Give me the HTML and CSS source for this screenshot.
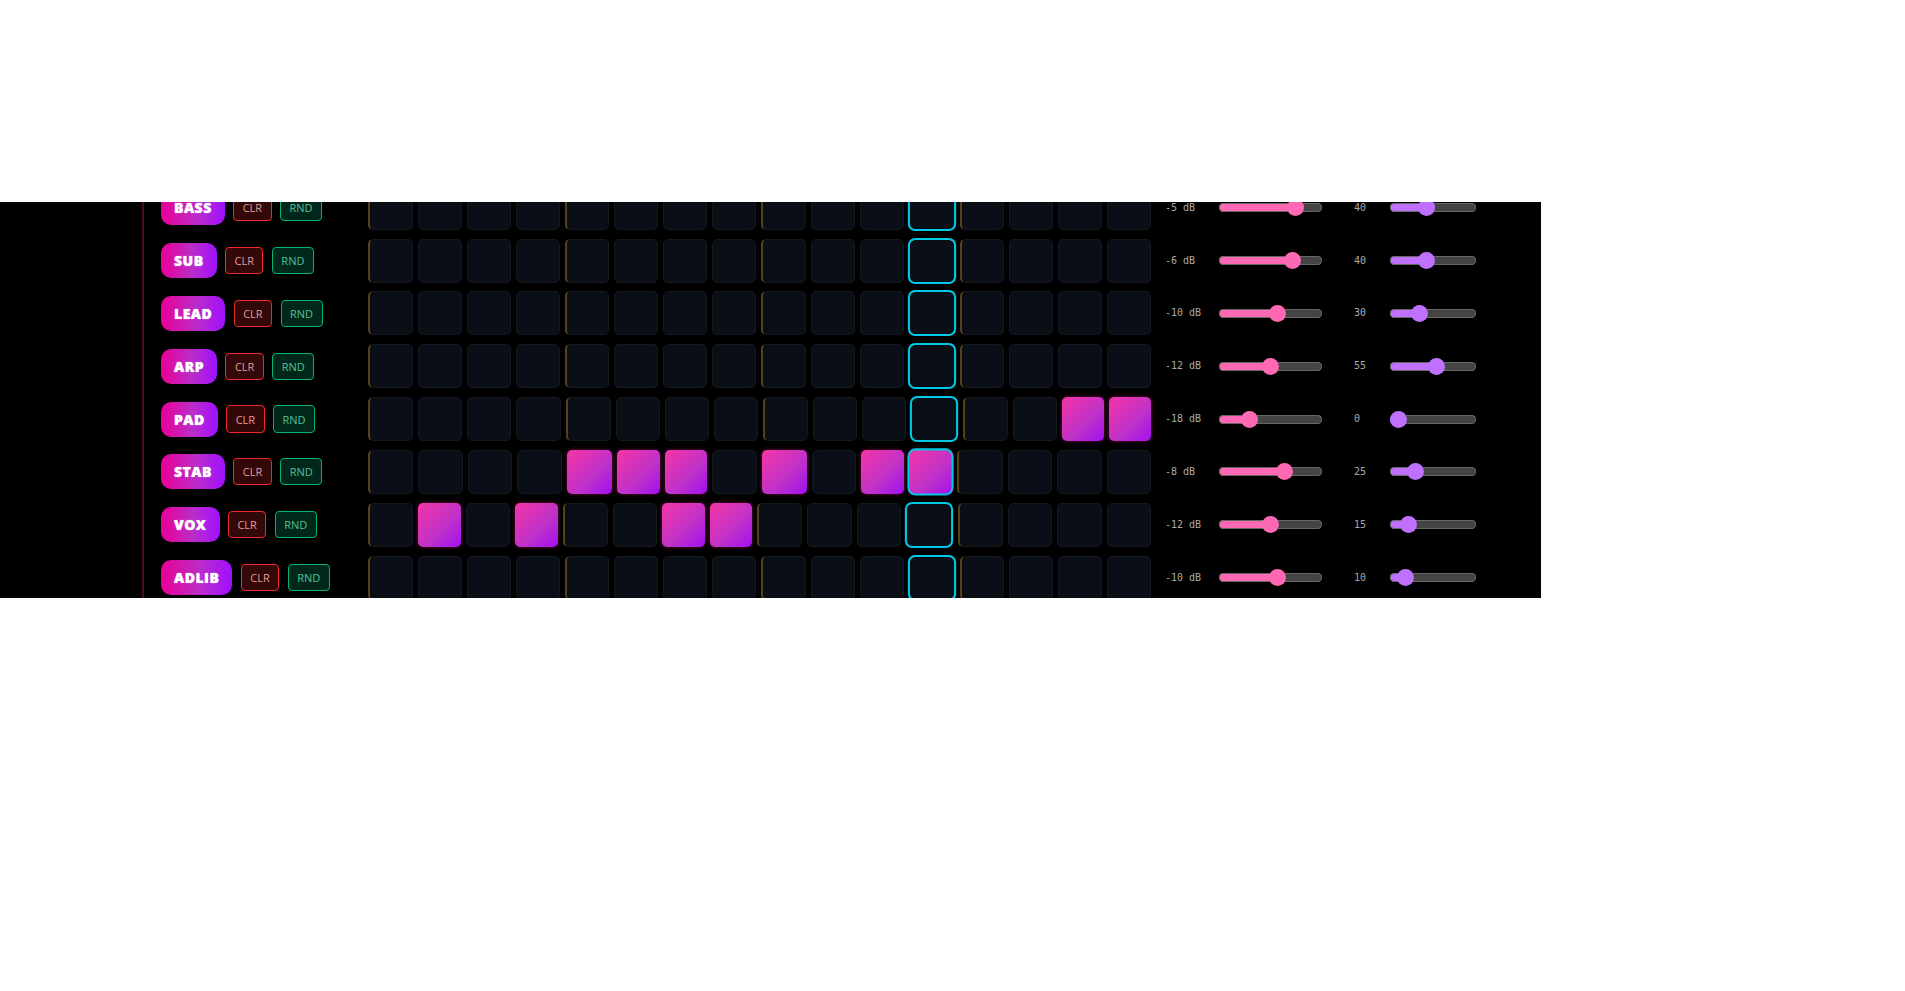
FILE: index.html
```html
<!DOCTYPE html>
<html lang="en">
<head>
<meta charset="utf-8">
<title>Step Sequencer</title>
<link rel="stylesheet" href="styles.css">
</head>
<body>
<main class="panel">
<div class="tracks">
<section class="row"><div class="head"><span class="name">BASS</span><button class="btn clr">CLR</button><button class="btn rnd">RND</button></div><div class="steps"><i class="c b"></i><i class="c"></i><i class="c"></i><i class="c"></i><i class="c b"></i><i class="c"></i><i class="c"></i><i class="c"></i><i class="c b"></i><i class="c"></i><i class="c"></i><i class="c p"></i><i class="c b"></i><i class="c"></i><i class="c"></i><i class="c"></i></div><span class="val db">-5 dB</span><input class="vol" type="range" min="-24" max="0" value="-5" style="--p:79%"><span class="val pan">40</span><input class="send" type="range" min="0" max="100" value="40" style="--p:42%"></section>
<section class="row"><div class="head"><span class="name">SUB</span><button class="btn clr">CLR</button><button class="btn rnd">RND</button></div><div class="steps"><i class="c b"></i><i class="c"></i><i class="c"></i><i class="c"></i><i class="c b"></i><i class="c"></i><i class="c"></i><i class="c"></i><i class="c b"></i><i class="c"></i><i class="c"></i><i class="c p"></i><i class="c b"></i><i class="c"></i><i class="c"></i><i class="c"></i></div><span class="val db">-6 dB</span><input class="vol" type="range" min="-24" max="0" value="-6" style="--p:75%"><span class="val pan">40</span><input class="send" type="range" min="0" max="100" value="40" style="--p:42%"></section>
<section class="row"><div class="head"><span class="name">LEAD</span><button class="btn clr">CLR</button><button class="btn rnd">RND</button></div><div class="steps"><i class="c b"></i><i class="c"></i><i class="c"></i><i class="c"></i><i class="c b"></i><i class="c"></i><i class="c"></i><i class="c"></i><i class="c b"></i><i class="c"></i><i class="c"></i><i class="c p"></i><i class="c b"></i><i class="c"></i><i class="c"></i><i class="c"></i></div><span class="val db">-10 dB</span><input class="vol" type="range" min="-24" max="0" value="-10" style="--p:58%"><span class="val pan">30</span><input class="send" type="range" min="0" max="100" value="30" style="--p:33%"></section>
<section class="row"><div class="head"><span class="name">ARP</span><button class="btn clr">CLR</button><button class="btn rnd">RND</button></div><div class="steps"><i class="c b"></i><i class="c"></i><i class="c"></i><i class="c"></i><i class="c b"></i><i class="c"></i><i class="c"></i><i class="c"></i><i class="c b"></i><i class="c"></i><i class="c"></i><i class="c p"></i><i class="c b"></i><i class="c"></i><i class="c"></i><i class="c"></i></div><span class="val db">-12 dB</span><input class="vol" type="range" min="-24" max="0" value="-12" style="--p:50%"><span class="val pan">55</span><input class="send" type="range" min="0" max="100" value="55" style="--p:55%"></section>
<section class="row"><div class="head"><span class="name">PAD</span><button class="btn clr">CLR</button><button class="btn rnd">RND</button></div><div class="steps"><i class="c b"></i><i class="c"></i><i class="c"></i><i class="c"></i><i class="c b"></i><i class="c"></i><i class="c"></i><i class="c"></i><i class="c b"></i><i class="c"></i><i class="c"></i><i class="c p"></i><i class="c b"></i><i class="c"></i><i class="c on"></i><i class="c on"></i></div><span class="val db">-18 dB</span><input class="vol" type="range" min="-24" max="0" value="-18" style="--p:25%"><span class="val pan">0</span><input class="send" type="range" min="0" max="100" value="0" style="--p:8%"></section>
<section class="row"><div class="head"><span class="name">STAB</span><button class="btn clr">CLR</button><button class="btn rnd">RND</button></div><div class="steps"><i class="c b"></i><i class="c"></i><i class="c"></i><i class="c"></i><i class="c b on"></i><i class="c on"></i><i class="c on"></i><i class="c"></i><i class="c b on"></i><i class="c"></i><i class="c on"></i><i class="c on p"></i><i class="c b"></i><i class="c"></i><i class="c"></i><i class="c"></i></div><span class="val db">-8 dB</span><input class="vol" type="range" min="-24" max="0" value="-8" style="--p:67%"><span class="val pan">25</span><input class="send" type="range" min="0" max="100" value="25" style="--p:28%"></section>
<section class="row"><div class="head"><span class="name">VOX</span><button class="btn clr">CLR</button><button class="btn rnd">RND</button></div><div class="steps"><i class="c b"></i><i class="c on"></i><i class="c"></i><i class="c on"></i><i class="c b"></i><i class="c"></i><i class="c on"></i><i class="c on"></i><i class="c b"></i><i class="c"></i><i class="c"></i><i class="c p"></i><i class="c b"></i><i class="c"></i><i class="c"></i><i class="c"></i></div><span class="val db">-12 dB</span><input class="vol" type="range" min="-24" max="0" value="-12" style="--p:50%"><span class="val pan">15</span><input class="send" type="range" min="0" max="100" value="15" style="--p:20%"></section>
<section class="row"><div class="head"><span class="name">ADLIB</span><button class="btn clr">CLR</button><button class="btn rnd">RND</button></div><div class="steps"><i class="c b"></i><i class="c"></i><i class="c"></i><i class="c"></i><i class="c b"></i><i class="c"></i><i class="c"></i><i class="c"></i><i class="c b"></i><i class="c"></i><i class="c"></i><i class="c p"></i><i class="c b"></i><i class="c"></i><i class="c"></i><i class="c"></i></div><span class="val db">-10 dB</span><input class="vol" type="range" min="-24" max="0" value="-10" style="--p:58%"><span class="val pan">10</span><input class="send" type="range" min="0" max="100" value="10" style="--p:16%"></section>
</div>
</main>
</body>
</html>
```
FILE: styles.css
```css
* { box-sizing: border-box; }
html, body { margin: 0; background: #fff; }
body { height: 991px; overflow: hidden; padding-top: 202px; }

.panel {
  width: 1541px;
  height: 396px;
  background: #000;
  overflow: hidden;
  padding-left: 142px;
}
.tracks {
  margin-top: -20.7px;
  padding-left: 17px;
  border-left: 2px solid #4a0b2f;
}
.row {
  display: flex;
  align-items: center;
  height: 52.83px;
}

.head {
  width: 207px;
  flex: none;
  display: flex;
  align-items: center;
  gap: 8.4px;
}
.name {
  font: 800 14px/19px "Open Sans", sans-serif;
  letter-spacing: 0.5px;
  color: #fff;
  text-shadow: 0 0 1px #fff;
  padding: 8px 13px;
  border-radius: 10px;
  background: linear-gradient(90deg, #e80096, #bb2dc8 55%, #a010ff);
}
.btn {
  font: 400 11px/15px "Open Sans", sans-serif;
  height: 27.2px;
  padding: 0 8.5px;
  border-radius: 4px;
  border: 1px solid;
}
.clr { background: #330808; border-color: #f0282d; color: #e59a9a; }
.rnd { background: #00281a; border-color: #00b377; color: #55c098; }

.steps {
  width: 783px;
  flex: none;
  display: flex;
  gap: 5px;
}
.c {
  flex: 1 1 0;
  min-width: 0;
  height: 44px;
  background: #0a0e17;
  border: 1px solid #14181f;
  border-radius: 5px;
}
.b { border-left: 2px solid #54421a; }
.on {
  border: 0;
  background: linear-gradient(135deg, #f535a5, #c032c8 58%, #a010f0);
  box-shadow: 0 0 4px rgba(255, 20, 147, 0.4);
}
.b.on {
  border: 1px solid transparent;
  border-left-width: 2px;
  background-origin: border-box;
}
.p {
  border: 2px solid #00c8e6;
  border-radius: 7px;
  transform: scale(1.05);
}
.on.p {
  border: 0;
  padding: 0 0.5px;
  box-shadow: 0 0 0 0.5px #00c8e6, inset 0 0 0 1.5px #00c8e6;
}

.val {
  font: 400 10px/14px "DejaVu Sans Mono", monospace;
  color: #aaa;
  flex: none;
}
.db { width: 54px; margin-left: 14px; }
.pan { width: 36px; margin-left: 32px; }

input[type="range"] {
  appearance: none;
  -webkit-appearance: none;
  flex: none;
  margin: 0;
  height: 9px;
  border-radius: 5px;
  box-shadow: inset 0 0 0 1px #666;
}
input[type="range"]::-webkit-slider-thumb {
  -webkit-appearance: none;
  width: 17px;
  height: 17px;
  border-radius: 50%;
}
.vol { width: 103px; background: linear-gradient(90deg, #ff69b4 var(--p), #444 var(--p)); }
.vol::-webkit-slider-thumb { background: #ff69b4; }
.send { width: 86px; background: linear-gradient(90deg, #bf70ff var(--p), #444 var(--p)); }
.send::-webkit-slider-thumb { background: #bf70ff; }
```
